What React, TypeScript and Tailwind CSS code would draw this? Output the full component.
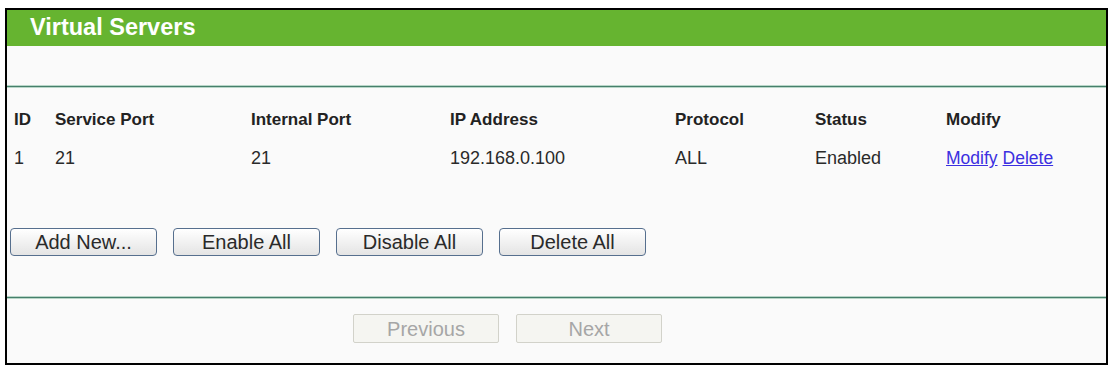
const columns = ["ID", "Service Port", "Internal Port", "IP Address", "Protocol", "Status", "Modify"];

const rows = [
  { id: "1", service: "21", internal: "21", ip: "192.168.0.100", protocol: "ALL", status: "Enabled" },
];

function Divider() {
  return <div className="h-[1px] bg-[#467f6b] border-y border-[#b9d6c8] box-content" />;
}

function ActionButton({ label }: { label: string }) {
  return (
    <button className="h-[28px] w-[147px] rounded-[4px] border border-[#566f8e] bg-gradient-to-b from-white to-[#e4e4e4] text-[20px] leading-none text-[#2a2a2a]">
      {label}
    </button>
  );
}

function PagerButton({ label }: { label: string }) {
  return (
    <button
      disabled
      className="h-[29px] w-[146px] rounded-[2px] border border-[#d2d2ca] bg-[#f5f5f1] text-[20px] leading-none text-[#a6a6a6]"
    >
      {label}
    </button>
  );
}

export default function App() {
  return (
    <main
      className="min-h-screen bg-white pl-[5px] pt-[8px]"
      style={{ fontFamily: '"Liberation Sans", Arial, sans-serif' }}
    >
      <div className="w-[1103px] h-[357px] border-2 border-black bg-[#fafafa] flex flex-col">
        <header className="h-[36px] bg-[#66b430] flex items-center pl-[23px]">
          <h1 className="text-[23.5px] font-bold text-white leading-none">Virtual Servers</h1>
        </header>

        <div className="h-[39px]" />
        <Divider />
        <div className="h-[12px]" />

        <div className="pl-[7px] text-[#222]">
          <div className="grid grid-cols-[41px_196px_199px_225px_140px_131px_1fr] h-[39px] items-center text-[17px] font-bold">
            {columns.map((c) => (
              <div key={c}>{c}</div>
            ))}
          </div>
          {rows.map((r) => (
            <div
              key={r.id}
              className="grid grid-cols-[41px_196px_199px_225px_140px_131px_1fr] h-[39px] items-center text-[18px] text-[#2a2a2a]"
            >
              <div>{r.id}</div>
              <div>{r.service}</div>
              <div>{r.internal}</div>
              <div>{r.ip}</div>
              <div>{r.protocol}</div>
              <div>{r.status}</div>
              <div className="flex gap-[5px] text-[17.5px] text-[#3b2fe0]">
                <a href="#" className="underline">Modify</a>
                <a href="#" className="underline">Delete</a>
              </div>
            </div>
          ))}
        </div>

        <div className="h-[50px]" />
        <div className="flex gap-[16px] pl-[3px]">
          <ActionButton label="Add New..." />
          <ActionButton label="Enable All" />
          <ActionButton label="Disable All" />
          <ActionButton label="Delete All" />
        </div>

        <div className="h-[40px]" />
        <Divider />
        <div className="h-[15px]" />

        <div className="flex gap-[17px] pl-[346px]">
          <PagerButton label="Previous" />
          <PagerButton label="Next" />
        </div>
      </div>
    </main>
  );
}
